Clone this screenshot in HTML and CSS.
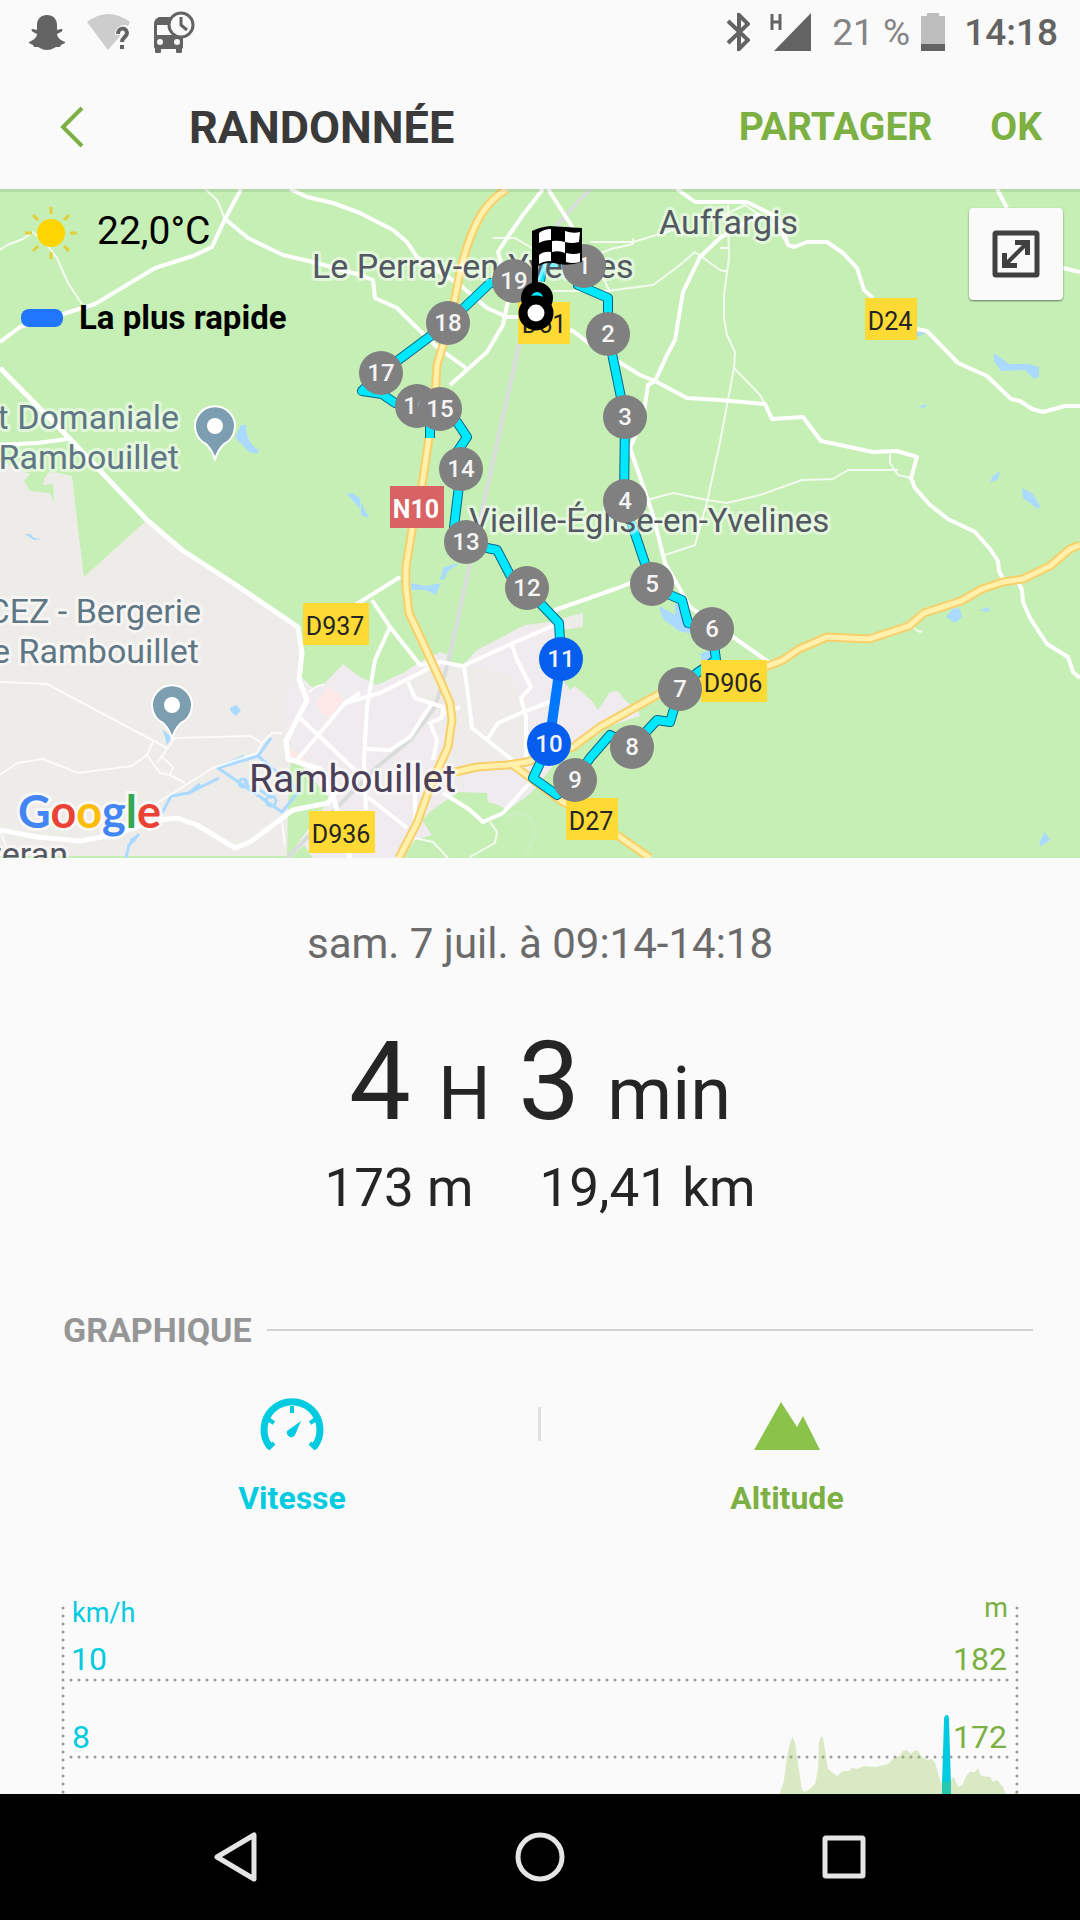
FILE: index.html
```html
<!DOCTYPE html>
<html lang="fr">
<head>
  <meta charset="UTF-8">
  <meta name="viewport" content="width=device-width, initial-scale=1.0">
  <title>Randonnée</title>
  <link rel="stylesheet" href="styles.css">
</head>
<body>
  <div class="status-bar">
    <div class="status-left">
      <svg width="36" height="36" viewBox="0 0 36 36"><path fill="#636363" d="M18 1c6 0 10 4 10 10v5l4-1c2 0 2 2 0 3l-4 2c0 3 3 6 8 8v1l-4 2-1 2h-4l-2 1c-2 1-4 2-7 2s-5-1-7-2l-2-1H5l-1-2-4-2v-1c5-2 8-5 8-8l-4-2c-2-1-2-3 0-3l4 1v-5C8 5 12 1 18 1z"/></svg>
      <svg width="44" height="36" viewBox="0 0 44 36"><path fill="#cdcdcd" d="M0 8Q21-8 43 8l-2 4c-6-3-13 2-13 9h6l-13 15z"/><path d="M31 20c0-7 9-7 9-1 0 4-5 4-5 9" fill="none" stroke="#636363" stroke-width="4"/><path fill="#636363" d="M33 31h4v4h-4z"/></svg>
      <svg width="42" height="42" viewBox="0 0 42 42"><path fill="#636363" d="M6 6h14v26h10v4c0 1-1 2-1 2v3q-1 2-3 2t-3-2v-3H8v3q-1 2-3 2t-3-2v-3L1 36V13q0-5 5-7zM18 25h12v12H18z"/><path fill="#fafafa" d="M4 14h14l3 10H4z"/><circle cx="7" cy="31" r="3" fill="#fafafa"/><circle cx="24" cy="31" r="3" fill="#fafafa"/><circle cx="28" cy="14" r="12" fill="#fafafa" stroke="#636363" stroke-width="3"/><path d="M28 6v8l6 5" fill="none" stroke="#636363" stroke-width="3"/></svg>
    </div>
    <div class="status-right">
      <svg width="24" height="38" viewBox="0 0 24 38"><path d="M2 8l20 19-9 9V2l9 9L2 30" fill="none" stroke="#636363" stroke-width="4"/></svg>
      <svg class="signal" width="42" height="38" viewBox="0 0 42 38"><path fill="#636363" d="M41 0v38H4z"/><path d="M2 1v16M10 1v16M2 9h8" fill="none" stroke="#636363" stroke-width="3"/></svg>
      <span class="percent">21 %</span>
      <svg class="battery" width="24" height="38" viewBox="0 0 24 38"><path fill="#bdbdbd" d="M6 0h12v3h6v35H0V3h6z"/><path fill="#636363" d="M0 31h24v7H0z"/></svg>
      <span class="clock">14:18</span>
    </div>
  </div>

  <header class="app-bar">
    <button class="back" aria-label="Retour">
      <svg width="24" height="42" viewBox="0 0 24 42"><path d="M22 2L3 21l19 19" fill="none" stroke="#7cb043" stroke-width="4"/></svg>
    </button>
    <h1>RANDONNÉE</h1>
    <button class="action">PARTAGER</button>
    <button class="action">OK</button>
  </header>

  <main>
    <section class="map">
      <svg class="map-canvas" viewBox="0 0 1080 669">
        <defs>
          <path id="main-roads" d="M507 0q-20 12-30 33-10 20-17 50l-5 26-12 47-6 20-2 33-13 87-10 45-6 37v20l3 26 14 30 17 37 10 23 2 17-4 27-18 40-13 36-18 35M455 583l22-5 30-2 20-3 46-15 27-20 43-24 25-14 100-23 15-6 16-11 28-12 42 2 40-13 15-13 37-12 21-12 21-7 20-3 27-13 20-17 10-4M513 576l47 35 57 35 33 23"/>
          <path id="track" d="M540 92l3-18 41 3-6 19 30 13v36l17 83-1 84 28 83 18 11 12 5 6 23 24 6 4 31-19 13-17 16-10 33-13-2-25 27-22-12-20 23-15 22-18 15-24-17 16-34M561 470l-2-36-19-20-13-15-17-13-13-25-10-2-21-6-12-15 7-58-4-17 10-15-10-15-17-13M430 219v30M440 220l-45-6-13-9-20-3 19-18 67-50 42-40 24-2 23 12"/>
        </defs>
        <rect width="1080" height="669" fill="#c6efb5"/>

        <!-- Open land and built-up areas -->
        <path fill="#eeece8" d="M0 272l30 13 23-2 19 4 5 44 7 57 63-57 35 30 51 33 40 27 25 17 4 26-5 27 12 12-20 80-2 84H0z"/>
        <path fill="#c6efb5" d="M24 292l9-10 16 1q-6 7-6 13l10-1 1 19-4-10-20-2z"/>
        <path fill="#efebee" d="M283 511l14-27 16 15 12-5 18-19 17 13 17 8 26-12 15-10 22-11 8 3-2 9 17 1 14-15 48-25 25-3 33-9v14l-22 2 2 51 7 10 5-4 18 16 5 8 12-18 8-1 9 11 10 6 3 8-33 11-29 13-20 20-27 33-23 17-10-5-10-3-1-9-29-1-26 18-10 10 10 15-17 5-13 18H287l43-59-30-35-17-40z"/>
        <path fill="#eeece8" d="M408 492l20-12 50-3 30 10 16 30 2 54-46 8-37-6 1-30-8-29-28-8zM525 437l25-4 33-9v14l-24 3z"/>
        <path fill="#ffe9e8" d="M316 512l13-15 15 13-8 10 -5 9-11-6zM286 556l20 14-2 8-15-6z"/>
        <path fill="#c6efb5" d="M290 669l14-13 9 13z"/>
        <path class="contour" d="M507 628q18-12 28 10 1 10-10 28"/>

        <!-- Water -->
        <path class="water" d="M180 0l3 3M187 5l2 4M229 53l3 2M241 236l-6 12 14 15 8 2 2-4q-13-6-13-25zM347 305l13 15v-11l-8-5zM361 313l8 16-8-3zM410 394l16 3 15-3-5 12-10-5-14 0zM440 390l4-12 16-4-12 8-4 9zM659 417l16 9 0-14 12 16 10 18-18-4-16-12zM700 465l11-5v18l-8-3zM917 148l9-4-9-4zM994 164l15 11 20 0 10 3v10l-5 2-9-9-24 1-7-10zM1022 299l11 6 7 12-2 3-15-11zM992 288l8-6-2 8-8 4zM948 418l12-8-3 4-10 5zM946 428l7-9 7 1 2 8-7 6zM979 421l10-3v5zM1039 654l6-11 5 8-9 6zM918 218l9-3-2 4z"/>
        <path class="water" d="M230 519l6-3 5 5-5 6-5-4zM163 541l9 7-5 8zM130 650l9-5-4 8-5 2zM25 345l5 0 4 4 8 1-8 1z"/>
        <path class="canal" d="M271 549l-13 18M244 567l-26 12 64 44 17-21M218 579l40-12 41 35M244 592l6 7M260 601l12 8M219 589l-30 15-18 3-9 17M200 595l-12 10M139 645l-10 11-3 13"/>
        <circle class="canal" cx="243" cy="594" r="4"/>
        <circle class="canal" cx="271" cy="612" r="5"/>

        <!-- Railway -->
        <path class="rail" d="M590 0l-33 36-20 60-18 60-35 157-14 61-22 100-13 44-25 33-33 27-90 91"/>

        <!-- Lanes -->
        <g class="lane">
          <path d="M205 0l12 11 8 19M0 61l7-5 16-6 10-7 14 13 10 13 11 25 14 21"/>
          <path d="M0 493l47 2 120 64M173 549l77-2 12 7-5 10-44 15-56 35M0 586l17-12 26-4 35 14 54-7 15-11 6-13M147 566l13 18 10 2 3-8-11-10M170 586l15 8M175 549l-18 25M262 554l10-10h10M282 633l3 25M0 641l6 16"/>
          <path d="M493 49h22l20 12M590 53h43l47-14M633 49v6l-22 5-24 10M553 102h54l46-6 27-20 15-13 25 18M600 83l10 20M728 16l1 53-5 37v23l3 17 8 17-1 16-14 74-13 60-12 43-30 10M734 179l26 27 5 9M720 28l25-12 28 20 15 19M720 59h9M720 81l8 2"/>
          <path d="M647 311l26-7 34 7 20 3 33-8 42-15 31-1 15-9h50M890 265v9l8 12 13 3M912 438l8 5 2-1"/>
          <path d="M490 633l7 10-2 11-25 14M410 648l23 5 15 16M309 504q5-8 15-8"/>
        </g>

        <!-- Roads -->
        <g class="road">
          <path class="wide" d="M0 179l70 71 77 81 35 30 51 33 40 27 25 17 4 26-3 27 8 20-21 41 2 18 32 10 13 27 17 62"/>
          <path d="M0 153l20-15 40-12 35-11 60-36 38-12 19-9 13-28L241 0M225 30l23 19 35 17 30 7 47 13 13 5 2 18 22 10 15 15 25 24 29 21M0 256l37-2 31-4"/>
          <path d="M290 0l17 8 26 6 27 10 33 17 14 12 10 15 43 28 27 23 20 9h13l53 14 17 13 50 31 15 6 32 17 33 2 45 4 7 15 31-2 18 24 52 11 24-1 20 6-6 21 4 10 15 17 18 14 27 13 15 17 8 12 1 10 4 8M1018 393l4 8 1 12 7 16 17 26 21 13 5 15 7 6"/>
          <path d="M543 0l-20 26-16 23-9 14 4 14 18 12-13 27-4 20-16 27-37 33M548 0l25 39 20 40M677 0l18 13h52l26 13 9 13 6 17 6 2 13-5h20l16 11 14 15 7 22 9 8M917 140l10 2 31 32 29 13 24 23 9 2 12 8 11 3 22-6h15"/>
          <path d="M760 25l-40 24-20 19-17 35-8 48-8 15-12 26-7 4-5 33-13 30 23 67 12 48 25 44 43 30 37 26M997 0l10 19M1063 79l17 4"/>
          <path d="M330 434l30-21 40-25M372 411l18 27 30 38 20-3 23 4 50-23 42-18 0-15 63-22 15-6M390 438l-15 33-8 47-3 53 2 50M345 514l35-10 40-20 20-11M408 493l7 16 28 9-1 11-12 5 7 17-4 20M432 514l-22 34-20 13-23-1M464 477l3 21 5 41 38 30 16 14M512 456l5 15 14 27-10 11 5 19v40M550 513l-27 10-25 11-11 17"/>
          <path d="M443 604l27 17 13 12 20-9 20-23 14-13M368 608l39 31M415 600l0 34M300 529l55 52M360 504l-15 10-48 57M460 518l-18 7"/>
          <path class="wide" d="M0 641l37 7 43 4 33-6 44-15 20-2 20 7 38 23 15-6 43-32 35-7 8-12"/>
        </g>

        <!-- Main roads -->
        <use class="main-road-edge" href="#main-roads"/>
        <use class="main-road" href="#main-roads"/>

        <!-- Recorded track -->
        <use class="track-edge" href="#track"/>
        <use class="track" href="#track"/>
        <path class="track-fast" d="M549 555l12-85"/>

        <!-- Place names -->
        <g class="place">
          <text x="312" y="89">Le Perray-en-Yvelines</text>
          <text x="659" y="45">Auffargis</text>
          <text class="village" x="469" y="343">Vieille-Église-en-Yvelines</text>
          <text x="68" y="677" text-anchor="end">Gazeran</text>
          <text class="city" x="249" y="603">Rambouillet</text>
        </g>
        <g class="place poi" text-anchor="end">
          <text x="179" y="240">Forêt Domaniale</text>
          <text x="179" y="280">de Rambouillet</text>
          <text x="201" y="434">CEZ - Bergerie</text>
          <text x="199" y="474">de Rambouillet</text>
        </g>

        <g class="pin">
          <path d="M215 271q-2-9-9-16a20 20 0 1 1 18 0q-7 7-9 16z"/>
          <circle cx="215" cy="237" r="8"/>
        </g>
        <g class="pin">
          <path d="M172 550q-2-9-9-16a20 20 0 1 1 18 0q-7 7-9 16z"/>
          <circle cx="172" cy="516" r="8"/>
        </g>

        <!-- Road numbers -->
        <g class="shield">
          <rect x="518" y="113" width="52" height="42"/><text x="544" y="144">D61</text>
          <rect x="865" y="109" width="52" height="42"/><text x="890" y="141">D24</text>
          <rect x="303" y="414" width="66" height="42"/><text x="335" y="446">D937</text>
          <rect x="701" y="471" width="66" height="42"/><text x="733" y="503">D906</text>
          <rect x="566" y="609" width="52" height="42"/><text x="591" y="641">D27</text>
          <rect x="309" y="622" width="66" height="42"/><text x="341" y="654">D936</text>
        </g>
        <g class="shield national">
          <rect x="390" y="297" width="54" height="42"/><text x="416" y="329">N10</text>
        </g>

        <!-- Kilometre markers -->
        <g class="km">
          <circle cx="514" cy="92" r="22"/><text x="514" y="100">19</text>
          <circle cx="448" cy="134" r="22"/><text x="448" y="142">18</text>
          <circle cx="381" cy="184" r="22"/><text x="381" y="192">17</text>
          <circle cx="417" cy="217" r="22"/><text x="417" y="225">16</text>
          <circle cx="440" cy="220" r="22"/><text x="440" y="228">15</text>
          <circle cx="461" cy="280" r="22"/><text x="461" y="288">14</text>
          <circle cx="466" cy="353" r="22"/><text x="466" y="361">13</text>
          <circle cx="527" cy="399" r="22"/><text x="527" y="407">12</text>
          <circle class="fast" cx="561" cy="470" r="22"/><text x="561" y="478">11</text>
          <circle class="fast" cx="549" cy="555" r="22"/><text x="549" y="563">10</text>
          <circle cx="575" cy="591" r="22"/><text x="575" y="599">9</text>
          <circle cx="632" cy="558" r="22"/><text x="632" y="566">8</text>
          <circle cx="680" cy="500" r="22"/><text x="680" y="508">7</text>
          <circle cx="712" cy="440" r="22"/><text x="712" y="448">6</text>
          <circle cx="652" cy="395" r="22"/><text x="652" y="403">5</text>
          <circle cx="625" cy="312" r="22"/><text x="625" y="320">4</text>
          <circle cx="625" cy="228" r="22"/><text x="625" y="236">3</text>
          <circle cx="608" cy="145" r="22"/><text x="608" y="153">2</text>
          <circle cx="584" cy="77" r="22"/><text x="584" y="85">1</text>
        </g>

        <!-- Start and finish -->
        <circle cx="537" cy="109" r="11" fill="#00e8ff" stroke="#000" stroke-width="10"/>
        <path d="M532 42q8-4 18-5 14 1 32 2v34q-16 5-28 1-8-1-16 3v22h-6z"/>
        <path fill="#fff" d="M539 44q5-4 12-4v11q-7 0-12 3zM565 42q8 3 15 1l-1 10q-7 2-14 0zM552 52q6-1 13 1v11q-6-3-13-1zM539 66q5-4 12-3v9q-7 0-12 3zM566 64q8 2 14 0v9q-7 2-14 0z"/>
        <circle cx="536" cy="124" r="13" fill="#fff" stroke="#000" stroke-width="9"/>

        <text class="brand" x="18" y="639"><tspan fill="#4285f4">G</tspan><tspan fill="#ea4335">o</tspan><tspan fill="#fbbc05">o</tspan><tspan fill="#4285f4">g</tspan><tspan fill="#34a853">l</tspan><tspan fill="#ea4335">e</tspan></text>
        <rect width="1080" height="3" fill-opacity=".08"/>
      </svg>

      <div class="legend">
        <div class="weather">
          <svg width="54" height="54" viewBox="0 0 54 54"><circle cx="27" cy="27" r="14" fill="#ffd400"/><path d="M27 1v7M27 46v7M1 27h7M46 27h7M9 9l5 5M40 40l5 5M9 45l5-5M40 14l5-5" stroke="#e3cf3b" stroke-width="3"/></svg>
          <span>22,0°C</span>
        </div>
        <div class="fastest"><i></i><span>La plus rapide</span></div>
      </div>

      <button class="expand" aria-label="Agrandir la carte">
        <svg width="48" height="48" viewBox="0 0 48 48"><rect x="3" y="3" width="42" height="42" rx="1" fill="none" stroke="#404040" stroke-width="5"/><path fill="#404040" d="M23 10h15v15h-5v-7L18 33h7v5H10V23h5v7l15-15h-7z"/></svg>
      </button>
    </section>

    <section class="summary">
      <p class="date">sam. 7 juil. à 09:14-14:18</p>
      <p class="duration">4 <small>H</small> 3 <small>min</small></p>
      <p class="totals"><span>173 m</span><span>19,41 km</span></p>
    </section>

    <section class="graph">
      <h2>GRAPHIQUE</h2>
      <div class="tabs">
        <button class="tab speed">
          <svg width="64" height="50" viewBox="0 0 64 50"><path d="M10 46A28 28 0 1 1 54 46" fill="none" stroke="#00cbe0" stroke-width="7"/><path d="M32 5v7M8 18l6 4M56 18l-6 4M8 48l6-6M56 48l-6-6" stroke="#00cbe0" stroke-width="4"/><path fill="#00cbe0" d="M41 20l-6 14q-2 3-5 2-4-2-3-6z"/></svg>
          Vitesse
        </button>
        <button class="tab altitude">
          <svg width="66" height="50" viewBox="0 0 66 50"><path fill="#8bc34a" d="M0 49L27 1l16 25 6-11 17 34z"/></svg>
          Altitude
        </button>
      </div>
      <svg class="chart" viewBox="0 0 1080 260">
        <g class="grid">
          <path d="M63 18v242M1017 18v242M71 90h938M71 167h938"/>
        </g>
        <path class="speed-bar" d="M942 260V195l2-65q0-5 3-5 2 0 2 5l2 65v65z"/>
        <path class="elevation" d="M775 260l5-57 4-13 3-23 2-10 2-7 2-3 2 6 2 14 3 20 2 12 2 3 6-3 5-5 3-14 1-27 2-7 2 2 2 12 3 19 5 4 4 3 6-5h6l3-3 5 1 7-3 12 1 12-3 7-7 5-1 3-5 4-1 4 4 4-4 3 1 4 6 5 3 5-1 3 4 6 20 9-2 4-4 4 10 4-2 5-10 3-3h5l3-4 3 8 9 1 3 5 4-2 6 7 3 7 2 56zM1012 260l2-56 3-5v61z"/>
        <g class="scale-speed">
          <text class="unit" x="72" y="32">km/h</text>
          <text x="71" y="80">10</text>
          <text x="72" y="158">8</text>
        </g>
        <g class="scale-altitude" text-anchor="end">
          <text class="unit" x="1008" y="27">m</text>
          <text x="1007" y="80">182</text>
          <text x="1007" y="158">172</text>
        </g>
      </svg>
    </section>
  </main>

  <nav class="nav-bar">
    <button aria-label="Précédent"><svg width="50" height="50" viewBox="0 0 50 50"><path d="M43 3v44L6 25z"/></svg></button>
    <button aria-label="Accueil"><svg width="50" height="50" viewBox="0 0 50 50"><circle cx="25" cy="25" r="22"/></svg></button>
    <button aria-label="Applications récentes"><svg width="50" height="50" viewBox="0 0 50 50"><rect x="6" y="6" width="38" height="38" rx="1"/></svg></button>
  </nav>
</body>
</html>
```

FILE: styles.css
```css
* {
  box-sizing: border-box;
}
body {
  margin: 0;
  height: 100vh;
  display: flex;
  flex-direction: column;
  font-family: Roboto, "Liberation Sans", sans-serif;
  background-color: #fafafa;
  color: #252525;
}
svg {
  display: block;
  flex-shrink: 0;
}
button {
  padding: 0;
  border: 0;
  background: none;
  font: inherit;
  cursor: pointer;
}
p, h1, h2 {
  margin: 0;
}

/* Status bar */
.status-bar {
  display: flex;
  justify-content: space-between;
  align-items: center;
  height: 64px;
  flex-shrink: 0;
  padding: 0 22px 0 29px;
  font-size: 37px;
}
.status-left,
.status-right {
  display: flex;
  align-items: center;
}
.status-left {
  gap: 22px;
}
.signal {
  margin-left: 20px;
}
.percent {
  margin-left: 20px;
  color: #858585;
}
.battery {
  margin-left: 11px;
}
.clock {
  margin-left: 19px;
  font-weight: 500;
  color: #636363;
}

/* App bar */
.app-bar {
  display: flex;
  align-items: center;
  height: 126px;
  flex-shrink: 0;
  margin-bottom: -1px;
  padding: 0 38px 0 60px;
}
.app-bar h1 {
  flex: 1;
  margin-left: 105px;
  font-size: 45px;
  font-weight: 700;
  color: #3a3a3a;
}
.action {
  margin-left: 58px;
  font-size: 39px;
  font-weight: 700;
  color: #7cb043;
}

main {
  flex: 1;
  min-height: 0;
  overflow: hidden;
}

/* Map */
.map {
  position: relative;
}
.map-canvas {
  width: 100%;
  height: auto;
}
.map-canvas path {
  stroke-linejoin: round;
}
.contour {
  fill: none;
  stroke: #cdeebf;
  stroke-width: 4;
}
.water {
  fill: #aadaff;
}
.canal {
  fill: none;
  stroke: #aadaff;
  stroke-width: 3;
}
.rail {
  fill: none;
  stroke: #d8dcdb;
  stroke-width: 4;
}
.lane {
  fill: none;
  stroke: #fff;
  stroke-width: 2;
  opacity: 0.8;
}
.road {
  fill: none;
  stroke: #fff;
  stroke-width: 4;
}
.road .wide {
  stroke-width: 5;
}
.main-road-edge {
  fill: none;
  stroke: #f8cf69;
  stroke-width: 9;
}
.main-road {
  fill: none;
  stroke: #fff0ac;
  stroke-width: 5;
}
.track-edge {
  fill: none;
  stroke: #0a6484;
  stroke-width: 10;
}
.track {
  fill: none;
  stroke: #00e8ff;
  stroke-width: 8;
}
.track-fast {
  fill: none;
  stroke: #0077ff;
  stroke-width: 10;
}
.place {
  font-size: 34px;
  fill: #535862;
  stroke: rgba(255, 255, 255, 0.5);
  stroke-width: 6px;
  stroke-linejoin: round;
  paint-order: stroke;
}
.poi {
  fill: #5f7784;
}
.village {
  font-size: 33px;
}
.city {
  font-size: 39px;
  fill: #4c4058;
}
.pin path {
  fill: #7c9eb0;
  stroke: #fff;
  stroke-width: 2;
}
.pin circle {
  fill: #fff;
}
.shield {
  font-size: 25px;
  text-anchor: middle;
  fill: #252525;
}
.shield rect {
  fill: #ffda35;
}
.national {
  fill: #fff;
  font-weight: 700;
}
.national rect {
  fill: #d96264;
}
.km {
  font-size: 24px;
  font-weight: 500;
  text-anchor: middle;
  fill: #f4f4f4;
}
.km circle {
  fill: #808080;
}
.km .fast {
  fill: #055eee;
}
.brand {
  font-family: Lato, sans-serif;
  font-size: 45px;
  font-weight: 700;
  stroke: rgba(255, 255, 255, 0.6);
  stroke-width: 6px;
  paint-order: stroke;
}
.legend {
  position: absolute;
  top: 17px;
  left: 21px;
  color: #000;
}
.weather {
  display: flex;
  align-items: flex-start;
  gap: 19px;
  padding-left: 3px;
  font-size: 39px;
  line-height: 50px;
}
.fastest {
  display: flex;
  align-items: center;
  gap: 16px;
  margin-top: 38px;
  font-size: 33px;
  font-weight: 700;
  line-height: 40px;
}
.fastest i {
  width: 42px;
  height: 18px;
  border-radius: 8px;
  background: #2176ff;
}
.expand {
  position: absolute;
  top: 19px;
  right: 17px;
  display: flex;
  align-items: center;
  justify-content: center;
  width: 94px;
  height: 92px;
  border-radius: 4px;
  background: #fafafa;
  box-shadow: 0 1px 2px rgba(0, 0, 0, 0.5);
}

/* Summary */
.summary {
  padding-top: 60px;
  text-align: center;
}
.date {
  font-size: 42px;
  line-height: 52px;
  color: #6b6b6b;
}
.duration {
  margin-top: 52px;
  font-size: 110px;
  line-height: 120px;
}
.duration small {
  font-size: 74px;
  line-height: 1;
}
.totals {
  display: flex;
  justify-content: center;
  gap: 66px;
  margin-top: 16px;
  font-size: 53px;
  line-height: 60px;
}

/* Graph */
.graph {
  margin-top: 92px;
}
.graph h2 {
  display: flex;
  align-items: center;
  gap: 15px;
  margin: 0 47px 0 63px;
  font-size: 34px;
  font-weight: 700;
  line-height: 40px;
  color: #969696;
}
.graph h2::after {
  content: "";
  flex: 1;
  height: 2px;
  background: #d2d2d2;
}
.tabs {
  display: flex;
  align-items: flex-start;
  margin: 51px 47px 0 46px;
}
.tabs::before {
  content: "";
  order: 1;
  width: 3px;
  height: 34px;
  margin-top: 6px;
  background: #e0e0e0;
}
.tab {
  flex: 1;
  display: flex;
  flex-direction: column;
  align-items: center;
  gap: 28px;
  font-size: 32px;
  font-weight: 700;
  line-height: 38px;
}
.tab svg {
  overflow: visible;
}
.speed {
  color: #00cbe0;
}
.altitude {
  order: 2;
  color: #7cb043;
}
.chart {
  width: 100%;
  height: auto;
  margin-top: 73px;
  font-size: 32px;
}
.unit {
  font-size: 27px;
}
.grid {
  fill: none;
  stroke: #9c9c9c;
  stroke-width: 3;
  stroke-linecap: round;
  stroke-dasharray: 0 8;
}
.speed-bar {
  fill: #00cbe0;
}
.elevation {
  fill: #8bc34a;
  fill-opacity: 0.3;
}
.scale-speed {
  fill: #00cbe0;
}
.scale-altitude {
  fill: #7cb043;
}

/* Android navigation */
.nav-bar {
  display: flex;
  justify-content: center;
  height: 126px;
  flex-shrink: 0;
  background: #000;
}
.nav-bar button {
  width: 304px;
  display: flex;
  align-items: center;
  justify-content: center;
}
.nav-bar svg {
  fill: none;
  stroke: #e5e5e5;
  stroke-width: 5;
  stroke-linejoin: round;
}
```
